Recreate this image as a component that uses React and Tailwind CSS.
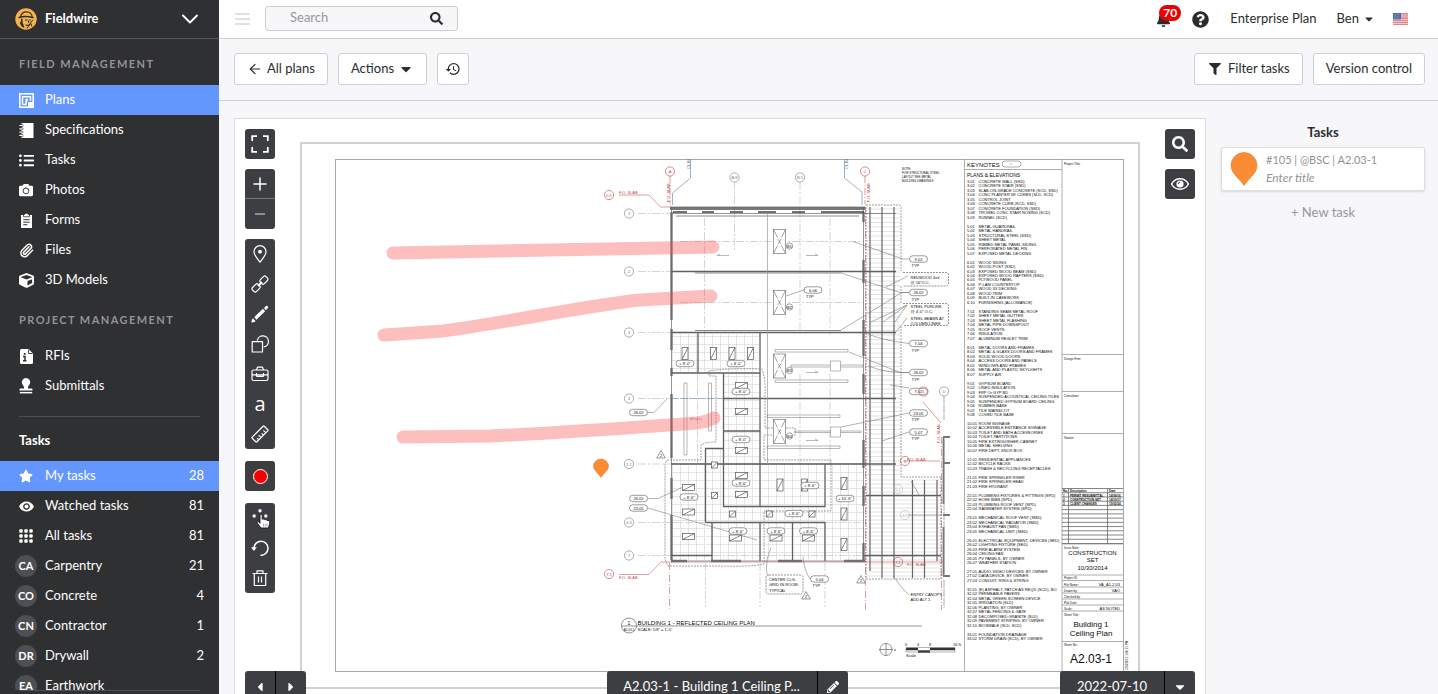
/* eslint-disable react/prop-types */
import {
  FaBell,
  FaCamera,
  FaCaretDown,
  FaCaretLeft,
  FaCaretRight,
  FaCube,
  FaFilter,
  FaListUl,
  FaPencilAlt,
  FaQuestionCircle,
  FaSearch,
  FaStar,
} from "react-icons/fa";
import { IoMdEye } from "react-icons/io";
import { MdHistory } from "react-icons/md";
import { ArrowLeft, ChevronDown, Paperclip } from "lucide-react";

/* ---------- icons ---------- */

const PlansIcon = () => (
  <svg viewBox="0 0 15 15" className="w-[15px] h-[15px]" fill="none" stroke="#fff">
    <rect x="0.8" y="0.8" width="13.4" height="13.4" strokeWidth="1.6" />
    <path d="M3.5 11.5V3.8H11.5V8M3.5 11.5H7V8H8.5M6.5 6.5H9" strokeWidth="1.4" />
    <rect x="9" y="9" width="5" height="5" fill="#fff" stroke="none" />
  </svg>
);

const SpecsIcon = () => (
  <svg viewBox="0 0 15 15" className="w-[15px] h-[15px]">
    <path d="M2.5 0h12v15h-12z" fill="#fff" />
    <path
      d="M0.8 2.5h2.4M0.8 5.8h2.4M0.8 9.1h2.4M0.8 12.4h2.4"
      stroke="#2f3032"
      strokeWidth="2.4"
      strokeLinecap="round"
    />
    <path
      d="M0.8 2.5h2.6M0.8 5.8h2.6M0.8 9.1h2.6M0.8 12.4h2.6"
      stroke="#fff"
      strokeWidth="1.2"
      strokeLinecap="round"
    />
  </svg>
);

const FormsIcon = () => (
  <svg viewBox="0 0 13 15" className="w-[13px] h-[15px]">
    <path d="M1 2h11v13H1z" fill="#fff" />
    <path d="M3.5 1.2h1.6a1.5 1.5 0 0 1 2.8 0h1.6v2.6h-6z" fill="#fff" stroke="#2f3032" strokeWidth="0.8" />
    <path d="M3.3 6.7h6.4M3.3 9.2h6.4M3.3 11.7h4" stroke="#2f3032" strokeWidth="1" />
  </svg>
);

const RfiIcon = () => (
  <svg viewBox="0 0 13 15" className="w-[13px] h-[15px]">
    <path d="M1.5 0H8.5L13 4.5V13.5A1.5 1.5 0 0 1 11.5 15H1.5A1.5 1.5 0 0 1 0 13.5V1.5A1.5 1.5 0 0 1 1.5 0z" fill="#fff" />
    <path d="M8.5 0.5V4.5H12.5" stroke="#2f3032" strokeWidth="0.9" fill="none" />
    <path d="M3 7.5H5V12M3 11.8H6.5" stroke="#2f3032" strokeWidth="1.5" fill="none" />
    <circle cx="4.7" cy="5" r="1" fill="#2f3032" />
  </svg>
);

const StampIcon = () => (
  <svg viewBox="0 0 14 16" className="w-[14px] h-4" fill="#fff">
    <path d="M7 0a4.3 4.3 0 0 1 4 5.6C10.5 7.3 9 8 9 9.5V10.5H12.5A1 1 0 0 1 13.5 11.5V12.6H0.5V11.5A1 1 0 0 1 1.5 10.5H5V9.5C5 8 3.5 7.3 3 5.6A4.3 4.3 0 0 1 7 0z" />
    <path d="M0.8 13.9h12.4v1.5H0.8z" />
  </svg>
);

const GridIcon = () => (
  <svg viewBox="0 0 14 14" className="w-[14px] h-[14px]" fill="#fff">
    {[0, 5, 10].map((y) =>
      [0, 5, 10].map((x) => (
        <rect key={`${x}-${y}`} x={x + 0.3} y={y + 0.3} width="3.4" height="3.4" rx="0.9" />
      ))
    )}
  </svg>
);

const LogoIcon = () => (
  <svg viewBox="0 0 22 22" className="w-[22px] h-[22px]">
    <circle cx="11" cy="11" r="10.7" fill="#f6b24e" />
    <path d="M5.5 9C6 5.5 8.5 3.8 11.5 3.8S17 6 17.2 9" fill="none" stroke="#2f3032" strokeWidth="1.2" />
    <path d="M3.5 9.7C7 8.4 14 8.4 18.5 9.7" fill="none" stroke="#2f3032" strokeWidth="1.5" />
    <path d="M6 10.5V13L4.8 15L6.5 18.5L9.5 20L8.5 16.5C7.5 15 7.3 12.5 7.8 11z" fill="#2f3032" />
    <path d="M10 12h2.5M14.5 12H16M13.5 12.5V14.8M10.5 16.8C12 17.6 14 17.4 15.3 16.3" fill="none" stroke="#2f3032" strokeWidth="1.2" />
    <path d="M12 20.5L15.5 15L17 18.5M15.5 15L17.8 12" fill="none" stroke="#2f3032" strokeWidth="1" />
  </svg>
);

const FlagIcon = () => (
  <svg viewBox="0 0 15 12" className="w-[15px] h-3">
    <rect width="15" height="12" rx="1" fill="#f4eef0" />
    <path d="M0 0.9h15M0 3h15M0 5.1h15M0 7.2h15M0 9.3h15M0 11.3h15" stroke="#d9606a" strokeWidth="1.1" />
    <rect width="8" height="6.4" fill="#4f6bb0" />
    <path d="M1 1.5h6M1 3.2h6M1 4.9h6" stroke="#b9c6e6" strokeWidth="0.6" strokeDasharray="0.7 0.8" />
  </svg>
);

const ToolSvg = ({ children }) => (
  <svg
    viewBox="0 0 18 18"
    className="w-[18px] h-[18px] overflow-visible"
    fill="none"
    stroke="#fff"
    strokeWidth="1.2"
    strokeLinejoin="round"
  >
    {children}
  </svg>
);

const FullscreenIcon = () => (
  <ToolSvg>
    <path d="M1.2 6V1.2H6M12 1.2H16.8V6M16.8 12V16.8H12M6 16.8H1.2V12" strokeWidth="1.8" strokeLinejoin="miter" />
  </ToolSvg>
);
const PlusIcon = () => (
  <ToolSvg>
    <path d="M9 2.5V15.5M2.5 9H15.5" strokeWidth="1.5" />
  </ToolSvg>
);
const MinusIcon = () => (
  <ToolSvg>
    <path d="M4 9H14" stroke="#a3a4a6" strokeWidth="1.6" />
  </ToolSvg>
);
const PinIcon = () => (
  <ToolSvg>
    <path d="M9 17.2C6.5 13.500 3 10.3 3 6.7A6 6 0 0 1 15 6.7C15 10.3 11.5 13.5 9 17.2z" />
    <circle cx="9" cy="6.7" r="1.9" fill="#fff" stroke="none" />
  </ToolSvg>
);
const LinkIcon = () => (
  <ToolSvg>
    <rect x="-4" y="-2.8" width="8" height="5.6" rx="1.8" transform="translate(12.9 5.1) rotate(-45)" />
    <rect x="-4" y="-2.8" width="8" height="5.6" rx="1.8" transform="translate(5.1 12.9) rotate(-45)" />
    <path d="M7 11L11 7" strokeWidth="1.8" />
  </ToolSvg>
);
const PencilIcon = () => (
  <ToolSvg>
    <path d="M4.3 13.5L13 5" strokeWidth="3.2" />
    <path d="M14.8 3.2L15.6 2.4" strokeWidth="3" strokeLinecap="round" />
    <path d="M1 17L1.8 14.2L3.8 16.2z" fill="#fff" />
  </ToolSvg>
);
const ShapesIcon = () => (
  <ToolSvg>
    <path d="M6.3 5.700A5.6 5.600 0 1 1 12.5 12" />
    <rect x="1.2" y="6.7" width="10.3" height="10.3" />
  </ToolSvg>
);
const ToolboxIcon = () => (
  <ToolSvg>
    <rect x="1" y="5" width="16" height="10.500" rx="1.500" />
    <path d="M5.5 5L6.5 2.2H11.5L12.5 5M1 9.8H17M5.5 8V11.600M12.5 8V11.600M5.5 11.300H12.5" />
  </ToolSvg>
);
const RulerIcon = () => (
  <ToolSvg>
    <g transform="rotate(-45 9 9)">
      <rect x="0.5" y="5.7" width="17" height="6.600" rx="0.8" />
      <path d="M4 12V9.8M7.3 12V8.8M10.6 12V9.8M14 12V8.8" />
    </g>
  </ToolSvg>
);
const MoveIcon = () => (
  <ToolSvg>
    <g fill="#fff" stroke="none">
      <circle cx="9" cy="1.8" r="1.7" />
      <circle cx="3.2" cy="7" r="1.700" />
      <circle cx="14.8" cy="7" r="1.700" />
    </g>
    <path
      d="M10 19L6.200 14C5.500 12.800 7 11.900 7.900 13L9 14.300V6.500C9 4.900 11.200 4.900 11.200 6.500V10.300C12.500 9.600 13.500 10.100 13.800 10.800C14.800 10.300 15.800 10.800 16.100 11.500C17.500 11.100 18.700 11.800 18.700 13.300C18.700 15.500 18 16.500 17.500 19z"
      fill="#fff"
      stroke="#161616"
      strokeWidth="0.9"
    />
    <path d="M12.500 14.500V17.500M14.300 14.500V17.500M16 14.500V17.500" stroke="#888" strokeWidth="0.7" />
  </ToolSvg>
);
const UndoIcon = () => (
  <ToolSvg>
    <path d="M3 9A7 7 0 1 1 9.5 16.2" strokeWidth="1.5" />
    <path d="M0 8.3H5.8L3 12z" fill="#fff" stroke="none" />
  </ToolSvg>
);
const TrashIcon = () => (
  <ToolSvg>
    <path d="M1.500 4.500H16.500M3.300 4.500V16.500H14.700V4.500M6 4.500V1.800H12V4.500M7.500 7.500V13.500M10.500 7.500V13.500" />
  </ToolSvg>
);
const EyeIcon = () => (
  <ToolSvg>
    <path d="M0.5 9C4.500 2 13.500 2 17.500 9C13.500 16 4.500 16 0.500 9z" strokeWidth="1.500" />
    <circle cx="9" cy="9" r="3.600" fill="#fff" stroke="none" />
    <path d="M9 7.200A1.800 1.800 0 0 0 7.200 9" stroke="#3d3e41" strokeWidth="1" />
  </ToolSvg>
);

/* ---------- sidebar ---------- */

const fieldLinks = [
  { name: "Plans", icon: <PlansIcon />, active: true },
  { name: "Specifications", icon: <SpecsIcon /> },
  { name: "Tasks", icon: <FaListUl size={15} /> },
  { name: "Photos", icon: <FaCamera size={14} /> },
  { name: "Forms", icon: <FormsIcon /> },
  { name: "Files", icon: <Paperclip size={15} strokeWidth={2.4} /> },
  { name: "3D Models", icon: <FaCube size={15} /> },
];

const projectLinks = [
  { name: "RFIs", icon: <RfiIcon /> },
  { name: "Submittals", icon: <StampIcon /> },
];

const taskLinks = [
  { name: "My tasks", icon: <FaStar size={14} />, count: 28, active: true },
  { name: "Watched tasks", icon: <IoMdEye size={17} />, count: 81 },
  { name: "All tasks", icon: <GridIcon />, count: 81 },
  { name: "Carpentry", initials: "CA", count: 21 },
  { name: "Concrete", initials: "CO", count: 4 },
  { name: "Contractor", initials: "CN", count: 1 },
  { name: "Drywall", initials: "DR", count: 2 },
  { name: "Earthwork", initials: "EA" },
];

const SideLink = ({ item }) => (
  <a
    href="#"
    className={`flex items-center h-[30px] px-[15px] text-[13px] ${
      item.active ? "bg-[#6497fe]" : ""
    }`}
  >
    <span className="w-[22px] mr-2 flex justify-center shrink-0">
      {item.initials ? (
        <span className="w-[22px] h-[22px] rounded-full bg-[#4d4f52] text-[11px] font-bold flex items-center justify-center">
          {item.initials}
        </span>
      ) : (
        item.icon
      )}
    </span>
    <span className="flex-1 whitespace-nowrap">{item.name}</span>
    <span>{item.count}</span>
  </a>
);

const SideHeading = ({ name }) => (
  <h2 className="h-[46px] pt-1 pl-[19px] flex items-center text-[11px] font-bold tracking-[0.13em] text-[#929395]">
    {name}
  </h2>
);

const Sidebar = () => (
  <aside className="w-[219px] shrink-0 flex flex-col bg-[#2f3032] text-white">
    <button className="h-[39px] shrink-0 flex items-center px-[15px] border-b border-[#55575a] text-[13px] font-bold">
      <LogoIcon />
      <span className="ml-2 flex-1 text-left">Fieldwire</span>
      <ChevronDown size={28} strokeWidth={1.6} />
    </button>
    <nav className="flex-1 min-h-0 overflow-hidden">
      <SideHeading name="FIELD MANAGEMENT" />
      {fieldLinks.map((item) => (
        <SideLink key={item.name} item={item} />
      ))}
      <SideHeading name="PROJECT MANAGEMENT" />
      {projectLinks.map((item) => (
        <SideLink key={item.name} item={item} />
      ))}
      <hr className="mt-[15px] mx-[19px] border-[#4c4e50]" />
      <h2 className="h-[44px] pt-1 pl-[19px] flex items-center text-[13px] font-bold">Tasks</h2>
      {taskLinks.map((item) => (
        <SideLink key={item.name} item={item} />
      ))}
    </nav>
    <div className="h-1 shrink-0 mx-[19px] border-t border-[#4c4e50]" />
  </aside>
);

/* ---------- top bars ---------- */

const TopBar = () => (
  <header className="h-[39px] shrink-0 flex items-center pl-4 pr-[30px] bg-white border-b border-[#cfcfd1] text-[13px]">
    <button aria-label="Toggle menu" className="flex flex-col gap-[3px] mr-[15px]">
      <span className="w-[15px] h-[2px] bg-[#e0e0e2]" />
      <span className="w-[15px] h-[2px] bg-[#e0e0e2]" />
      <span className="w-[15px] h-[2px] bg-[#e0e0e2]" />
    </button>
    <label className="w-[193px] h-[25px] flex items-center mb-[2px] pl-6 pr-[14px] bg-[#f7f7f9] border border-[#cfcfd1] rounded-[3px]">
      <input
        type="text"
        placeholder="Search"
        aria-label="Search"
        className="flex-1 min-w-0 bg-transparent outline-none placeholder:text-[#97989b]"
      />
      <FaSearch size={13} />
    </label>
    <div className="flex-1" />
    <button aria-label="Notifications" className="relative mr-[21px]">
      <FaBell size={15} />
      <span className="absolute -top-[7px] left-[3px] w-[22px] h-4 rounded-full bg-[#e90000] text-white text-xs font-bold leading-4 text-center">
        70
      </span>
    </button>
    <button aria-label="Help" className="mr-[21px]">
      <FaQuestionCircle size={17} />
    </button>
    <a href="#" className="mr-5">
      Enterprise Plan
    </a>
    <button className="flex items-center gap-1 mr-[18px]">
      Ben <FaCaretDown size={12} />
    </button>
    <FlagIcon />
  </header>
);

const BarButton = ({ children, label, className = "px-3" }) => (
  <button
    aria-label={label}
    className={`h-8 flex items-center bg-white border border-[#cfcfd3] rounded-[3px] text-[13px] whitespace-nowrap ${className}`}
  >
    {children}
  </button>
);

const ActionBar = () => (
  <div className="h-[62px] shrink-0 flex items-center gap-[10px] pb-[2px] pl-[15px] pr-[13px] border-b border-[#cfcfd3]">
    <BarButton>
      <ArrowLeft size={16} strokeWidth={1.8} className="mr-1" />
      All plans
    </BarButton>
    <BarButton>
      Actions
      <FaCaretDown size={16} className="ml-1" />
    </BarButton>
    <BarButton label="History" className="w-8 justify-center">
      <MdHistory size={16} />
    </BarButton>
    <div className="flex-1" />
    <BarButton>
      <FaFilter size={12} className="ml-[2px] mr-[7px]" />
      Filter tasks
    </BarButton>
    <BarButton>Version control</BarButton>
  </div>
);

/* ---------- drawing sheet ---------- */

const keynotes = `3.01|CONCRETE WALL (SSD)
3.02|CONCRETE STAIR (SSD)
3.03|SLAB-ON-GRADE CONCRETE (SCD, SSD)
3.04|CONC PLANTER W/ CURBS (SLD, SCD)
3.05|CONTROL JOINT
3.06|CONCRETE CURB (SCD, SSD)
3.07|CONCRETE FOUNDATION (SSD)
3.08|TROWEL CONC STAIR NOSING (SCD)
3.09|RUNNEL (SCD)

5.01|METAL GUARDRAIL
5.02|METAL HANDRAIL
5.03|STRUCTURAL STEEL (SSD)
5.04|SHEET METAL
5.05|RIBBED METAL PANEL SIDING
5.06|PERFORATED METAL FIN
5.07|EXPOSED METAL DECKING

6.01|WOOD SIDING
6.02|WOOD POST (SSD)
6.03|EXPOSED WOOD BEAM (SSD)
6.04|EXPOSED WOOD RAFTERS (SSD)
6.05|PLYWOOD PANEL
6.06|P-LAM COUNTERTOP
6.07|WOOD 3X DECKING
6.08|WOOD TRIM
6.09|BUILT-IN CASEWORK
6.10|FURNISHING (ALLOWANCE)

7.01|STANDING SEAM METAL ROOF
7.02|SHEET METAL GUTTER
7.03|SHEET METAL FLASHING
7.04|METAL PIPE DOWNSPOUT
7.05|ROOF VENTS
7.06|INSULATION
7.07|ALUMINUM REGLET TRIM

8.01|METAL DOORS AND FRAMES
8.02|METAL & GLASS DOORS AND FRAMES
8.03|SOLID WOOD DOORS
8.04|ACCESS DOORS AND PANELS
8.05|WINDOWS AND FRAMES
8.06|METAL AND PLASTIC SKYLIGHTS
8.07|SUPPLY AIR

9.01|GYPSUM BOARD
9.02|LINED INSULATION
9.03|FRP Or GYP BD
9.04|SUSPENDED ACOUSTICAL CEILING TILES
9.05|SUSPENDED GYPSUM BOARD CEILING
9.06|RUBBER BASE
9.07|TILE WAINSCOT
9.08|COVED TILE BASE

10.01|ROOM SIGNAGE
10.02|ACCESSIBLE ENTRANCE SIGNAGE
10.03|TOILET AND BATH ACCESSORIES
10.04|TOILET PARTITIONS
10.05|FIRE EXTINGUISHER CABINET
10.06|METAL SHELVING
10.07|FIRE DEPT. KNOX BOX

12.01|RESIDENTIAL APPLIANCES
12.02|BICYCLE RACKS
12.03|TRASH & RECYCLING RECEPTACLES

21.01|FIRE SPRINKLER RISER
21.02|FIRE SPRINKLER HEAD
21.03|FIRE HYDRANT

22.01|PLUMBING FIXTURES & FITTINGS (SPD)
22.02|HOSE BIBB (SPD)
22.03|PLUMBING ROOF VENT (SPD)
22.04|RAINWATER SYSTEM (SPD)

23.01|MECHANICAL ROOF VENT (SMD)
23.02|MECHANICAL RADIATOR (SMD)
23.04|EXHAUST FAN (SMD)
23.05|MECHANICAL UNIT (SMD)

26.01|ELECTRICAL EQUIPMENT, DEVICES (SED)
26.02|LIGHTING FIXTURE (SED)
26.03|FIRE ALARM SYSTEM
26.04|CEILING FAN
26.05|PV PANELS, BY OWNER
26.07|WEATHER STATION

27.01|AUDIO-VIDEO DEVICES, BY OWNER
27.02|DATA DEVICE, BY OWNER
27.03|CONDUIT, RING & STRING

32.01|(E) ASPHALT, PATCH AS REQD (SCD), BO
32.02|PERMEABLE PAVERS
32.04|METAL GREEN SCREEN DEVICE
32.05|IRRIGATION (SLD)
32.06|PLANTING, BY OWNER
32.07|METAL FENCING & GATE
32.08|DECOMPOSED GRANITE (SLD)
32.09|PAVEMENT STRIPING, BY OWNER
32.10|BIOSWALE (SLD, SCD)

33.01|FOUNDATION DRAINAGE
33.02|STORM DRAIN (SCD), BY OWNER`.split("\n");

const Label = ({ x, y, size = 4, children, ...rest }) => (
  <text x={x} y={y} fontSize={size} stroke="none" fill="#0c0c0c" {...rest}>
    {children}
  </text>
);

// numbered bubble at the end of a grid line
const Bubble = ({ x, y, n, color = "#777", r = 4.6 }) => (
  <g stroke={color} fill="none" strokeWidth="0.6">
    <circle cx={x} cy={y} r={r} />
    <Label x={x} y={y + 1.5} fill={color} textAnchor="middle">
      {n}
    </Label>
  </g>
);

// keynote tag, centred on x / y
const Tag = ({ x, y, n, typ }) => (
  <g stroke="#555" strokeWidth="0.6">
    <rect x={x - 9} y={y - 3.2} width="18" height="6.4" rx="3.2" fill="#fff" />
    <Label x={x} y={y + 1.5} textAnchor="middle">
      {n}
    </Label>
    {typ && (
      <Label x={x - 7} y={y + 8}>
        TYP
      </Label>
    )}
  </g>
);

const Light = ({ x, y, w = 12, h = 6 }) => (
  <g stroke="#555" strokeWidth="0.7" fill="#fff">
    <rect x={x - w / 2} y={y - h / 2} width={w} height={h} />
    <path d={`M${x - w / 2} ${y + h / 2}L${x + w / 2} ${y - h / 2}`} />
  </g>
);

const Skylight = ({ x, y, n }) => (
  <g stroke="#666" strokeWidth="0.6" fill="#fff">
    <rect x={x - 6.2} y={y - 12} width="12.4" height="24" />
    <path
      d={`M${x - 6} ${y - 12}l4 8M${x + 6} ${y - 12}l-4 8M${x - 6} ${y + 12}l4 -8M${x + 6} ${y + 12}l-4 -8M${x - 1.5} ${y - 2.5}l3 5M${x + 1.5} ${y - 2.5}l-3 5`}
    />
    <circle cx={x + 10} cy={y + 4.5} r="3.2" />
    <Label x={x + 10} y={y + 6} textAnchor="middle">
      {n}
    </Label>
  </g>
);

const Revision = ({ x, y }) => (
  <g stroke="#555" strokeWidth="0.6" fill="none">
    <path d={`M${x} ${y - 4.5}l4.3 7.5h-8.6z`} />
    <Label x={x} y={y + 2} textAnchor="middle">
      2
    </Label>
  </g>
);

const gridRows = [
  [213.5, "1"],
  [271.5, "2"],
  [332.5, "3"],
  [398.5, "4"],
  [464, "5.1"],
  [522.5, "6.3"],
  [555.5, "7"],
];

const tags = [
  [918.5, 259, "9.02", true],
  [813, 290, "6.06", true],
  [918.5, 292.5, "26.02", true],
  [918.5, 343.5, "7.04", true],
  [918.5, 372.5, "26.02", true],
  [918.5, 391.5, "7.02"],
  [918.5, 413, "23.05", true],
  [918.5, 432, "5.07", true],
  [638.5, 412.5, "26.02"],
  [638.5, 498.5, "26.02"],
  [638.5, 508, "23.05"],
  [819.5, 579, "5.04", true],
  [685, 363.5, "+ 8'-0\""],
  [736, 363.5, "+ 8'-0\""],
  [741, 391.5, "+ 8'-0\""],
  [741, 439.5, "+ 8'-0\""],
  [741, 483, "+ 8'-6\""],
  [689, 497, "+ 8'-6\""],
  [810, 485.5, "+ 8'-6\""],
  [794, 513.5, "+ 8'-6\""],
  [845, 498.5, "+ 10'-6\""],
  [738, 531, "+ 8'-6\""],
  [776, 531, "+ 8'-6\""],
  [808.5, 531, "+ 8'-6\""],
];

const lights = [
  [685, 353.5, 6, 12],
  [713.5, 353.5, 6, 12],
  [732, 353.5, 6, 12],
  [750.5, 353.5, 6, 12],
  [741.5, 385.5],
  [741.5, 411.5],
  [741.5, 450.5],
  [741.5, 475.5],
  [741.5, 494.5],
  [688.5, 487.5],
  [688.5, 512],
  [688.5, 536.5],
  [714.5, 465, 6, 6],
  [714.5, 495.5, 6, 6],
  [732.5, 514, 6, 6],
  [769.5, 514, 6, 6],
  [812, 514, 6, 6],
  [780, 485, 6, 12],
  [804.5, 485, 6, 12],
  [844, 483.5, 6, 12],
  [844, 514, 6, 12],
  [844, 544.5, 6, 12],
  [735.5, 538],
  [776, 538],
  [808.5, 538],
];

const titleRows = [
  [579, "Project ID:", ""],
  [585.5, "File Name:", "VA_A1-2.03"],
  [591.5, "Drawn by:", "VAO"],
  [597.5, "Checked by:", ""],
  [603.5, "Plot Date:", ""],
  [609.5, "Scale:", "AS NOTED"],
];

const revisions = [
  [492, "No.", "Description", "Date"],
  [496.5, "1", "PERMIT RESUBMITTAL", "14/09/16"],
  [500.5, "2", "CONSTRUCTION SET", "14/10/17"],
  [505, "3", "CLIENT CHANGES", "15/02/24"],
];

const TitleBlock = () => (
  <g stroke="#999" strokeWidth="0.8" fill="none">
    <path d="M964.5 159V671.5M1062 159V671.5M964.5 169.5H1062" />
    <rect x="1002" y="161" width="19" height="6" rx="3" />
    <path d="M1009 164H1013" strokeWidth="0.5" />
    <path d="M1062 354.5H1123M1062 391.5H1123M1062 433.5H1123" />
    <path d="M1062 544H1123M1062 575H1123M1062 580.5H1123M1062 587H1123M1062 593H1123M1062 599H1123M1062 605H1123M1062 611H1123M1062 641.5H1123" />
    <g stroke="#666">
      {Array.from({ length: 14 }, (_, i) => (
        <path key={i} d={`M1062 ${488.5 + i * 4.23}H1123`} />
      ))}
      <path d="M1068.5 488.5V543.5M1107.5 488.5V543.5" />
    </g>
    <Label x="967" y="167" size={6}>KEYNOTES</Label>
    <Label x="967" y="177" size={5}>PLANS &amp; ELEVATIONS</Label>
    <Label x="1064" y="164.5" size={3}>Project Title:</Label>
    <Label x="1064" y="359.5" size={3}>Design Firm:</Label>
    <Label x="1064" y="396.5" size={3}>Consultant:</Label>
    <Label x="1064" y="438.5" size={3}>Station:</Label>
    <g fontWeight="bold">
      {revisions.map(([y, no, description, date]) => (
        <g key={no}>
          <Label x="1063" y={y} size={3}>{no}</Label>
          <Label x="1070" y={y} size={3}>{description}</Label>
          <Label x="1109" y={y} size={3}>{date}</Label>
        </g>
      ))}
    </g>
    <Label x="1064" y="548.5" size={3}>Issue Note:</Label>
    <g textAnchor="middle">
      <Label x="1092.5" y="554.5" size={6}>CONSTRUCTION</Label>
      <Label x="1092.5" y="562" size={6}>SET</Label>
      <Label x="1092.5" y="570" size={6}>10/30/2014</Label>
      <Label x="1091" y="626.5" size={8}>Building 1</Label>
      <Label x="1091" y="635.5" size={8}>Ceiling Plan</Label>
      <Label x="1091" y="662.5" size={12}>A2.03-1</Label>
    </g>
    {titleRows.map(([y, name, value]) => (
      <g key={name}>
        <Label x="1064" y={y} size={3}>{name}</Label>
        <Label x="1120" y={y} textAnchor="end">{value}</Label>
      </g>
    ))}
    <Label x="1064" y="616" size={3}>Sheet Title:</Label>
    <Label x="1064" y="646" size={3}>Sheet No.:</Label>
    <Label x="0" y="0" size={3} transform="translate(1128 670) rotate(-90)">2/24/2015 1:00:11 PM</Label>
    {keynotes.map((line, i) => {
      const [n, text] = line.split("|");
      const y = 182.8 + i * 4.485;
      return (
        line && (
          <g key={n}>
            <Label x="967" y={y}>{n}</Label>
            <Label x="978.5" y={y}>{text}</Label>
          </g>
        )
      );
    })}
  </g>
);

const Building = () => (
  <g fill="none">
    {/* canopy */}
    <g stroke="#c4c4c6" strokeWidth="0.5">
      {Array.from({ length: 60 }, (_, i) => (
        <path key={i} d={`M866 ${209 + i * 4.5}H900`} />
      ))}
      {Array.from({ length: 25 }, (_, i) => (
        <path key={i} d={`M866 ${480 + i * 4}H941`} />
      ))}
    </g>
    <path
      d="M866 205H899Q901 205 901 207V271M901 286V303M901 326V477H941V579H866V205"
      stroke="#777"
      strokeWidth="0.7"
      strokeDasharray="2 1"
    />
    <path
      d="M870 207V571M882 207V578M894 207V578M912.5 480V578M924.5 480V578M937 480V561"
      stroke="#666"
      strokeWidth="1.2"
    />

    {/* ceiling tiles */}
    <g fill="url(#tile)" stroke="none">
      <path d="M672 334H759V372H672zM724 374H759V505H724zM672 465H705V560H672zM761 465H824V505H761zM826 465H863V560H826zM706 449H723V521H706zM706 507H825V521H706zM706 523H825V560H706z" />
    </g>

    {/* grid lines */}
    <g stroke="#aaa" strokeWidth="0.5" strokeDasharray="8 2 2 2">
      {gridRows.map(([y]) => (
        <path key={y} d={`M638 ${y}H670`} />
      ))}
      <path d="M734.5 182V250M800 182V335M704.5 218V335M830 218V335M697.5 374V464M800 374V464M830 374V464" />
      <path d="M680 241.5H864M680 302.5H864M671 522.5H864M671 555.5H864" />
      <path d="M705.5 563V607M760 563V607M825 563V607" />
    </g>
    <g stroke="#5d7d9c" strokeWidth="0.6">
      <path d="M690.5 160V178L672.5 193V205M844.5 160V178L862 192V205" />
      <path d="M944 396V420M944 580V608M944 440V577M671 464H866M671 398.5H866" strokeDasharray="8 1" />
    </g>
    <g stroke="#c1272d" strokeWidth="0.6" opacity="0.75">
      <path d="M619 195H649L660.5 207H671M619 574.5H649L661 562H944" />
      <path d="M670 176V204M865 176V204M669.5 563V610M865.5 207V610M941.5 437V610" strokeDasharray="7 2 1 2" />
      <path d="M923 402L941 423M903 461H940" />
    </g>

    {/* outer walls */}
    <g stroke="#77777a" strokeWidth="2.4">
      <path d="M670 208.5H865" strokeWidth="3" />
      <path d="M671.5 212V320M671.5 329V350M671.5 368V376M671.5 394V458M671.5 478V499M671.5 515V560" />
      <path d="M863.5 212V222M863.5 260V283M863.5 320V356M863.5 374V394M863.5 440V468M863.5 486V506M863.5 543V560" />
      <path d="M671 561H687M711 561H741M778 561H802M844 561H865" />
      <path d="M943.5 437V504M943.5 527V576M943 437H950M943 463H950M943 515H950M943 576H950" strokeWidth="1.8" />
    </g>
    <path d="M671.5 207V561M863.5 207V561M671 561H864M670 207H865M671 213.5H896" stroke="#666" strokeWidth="0.7" />
    <path d="M673 212H687M702 212H714M730 212H743M758 212H776M792 212H805M821 212H864" stroke="#444" strokeWidth="1.6" />
    <path d="M676 216H859M695 273H841M695 330.5H841" stroke="#888" strokeWidth="1" />

    {/* beams and partitions */}
    <g stroke="#606062" strokeWidth="1.3">
      <path d="M671 271.5H896M671 332.5H896M723 398.5H896M671 464H896M866 495.5H941M671 555.5H712M864 555.5H941" />
      <path d="M698 333V373M671 373H760M760 333V373M723.5 373V506.5H825V464M760 373V506M723 431H760M705.5 522V448.5H723M705.5 522.5H825V561M712 522V561M760 522V561M792.5 522V561" />
    </g>
    <path d="M767.5 213V464" stroke="#999" strokeWidth="0.7" />

    {/* mechanical runs */}
    <g stroke="#888" strokeWidth="0.6">
      <path d="M775 349.5h73v2.5h-73zM775 380h73v2.5h-73zM767 415h73v2.5h-73zM767 446h73v2.5h-73zM684 383h3v72h-3zM708.5 383h3v48h-3z" />
      <path d="M791 365h72v2h-72zM795 431h66v1.5h-66z" />
      <path d="M830.5 361h10v10h-10zM830.5 427h10v10h-10z" fill="#fff" />
      <path d="M729 255.5H717l3 -1.5M806 255.5h12l-3 -1.5M806 372.5h12l-3 -1.5M806 440.5h12l-3 -1.5M702 419H690l3 -1.5" />
    </g>

    {/* revision clouds */}
    <path
      d="M667 460H701V445Q705 442 716 442V376H709V371Q725 368 762 369Q766 380 765 395V428H795V435H764V460H831V511H764V564Q750 567 720 566H668Q664 560 665 550V464z"
      stroke="#888"
      strokeWidth="0.8"
      strokeDasharray="2 1"
    />

    {/* leaders */}
    <g stroke="#666" strokeWidth="0.5">
      <path d="M909 259H903L853 241.5M909 292.5H900L841 273M909 292.5H902L841 330M804 290L786 296M908 276L886 287M907 305L871 322M907 305L883 322M907 305L895 322M907 318L896 332" />
      <path d="M909 343.5Q880 340 866 333M909 372.5H900L849 352M909 372.5Q890 374 868 366M909 388L890 385M909 413L841 427M909 432L882 441M648 412.5H654L667 399M648 498.5H658L682 487.5M648 508L757 540" />
      <path d="M767 575Q765 560 771 548M810 579Q804 570 803 557M909 595Q901 588 894 577M866 495.5H911M911 481L919 495M908 515H941" />
    </g>

    {lights.map(([x, y, w, h]) => (
      <Light key={`${x}-${y}`} x={x} y={y} w={w} h={h} />
    ))}
    <Skylight x={779.5} y={241.5} n="B1" />
    <Skylight x={779.5} y={302.5} n="B2" />
    <Skylight x={779.5} y={366} n="B3" />
    <Skylight x={779.5} y={431.5} n="B4" />
    {tags.map(([x, y, n, typ]) => (
      <Tag key={`${x}-${y}`} x={x} y={y} n={n} typ={typ} />
    ))}
    {gridRows.map(([y, n]) => (
      <Bubble key={n} x={629} y={y} n={n} />
    ))}
    <Bubble x={670} y={171.5} n="A" color="#b5474b" />
    <Bubble x={734.5} y={177.5} n="A.8" />
    <Bubble x={800} y={177.5} n="B.5" />
    <Bubble x={865} y={171.5} n="C" color="#b5474b" />
    <Bubble x={609} y={195} n="0.9" color="#b5474b" />
    <Bubble x={609} y={574} n="7.1" color="#b5474b" />
    <Bubble x={923.5} y={391.5} n="1" color="#b5474b" />
    <Bubble x={944} y={391.5} n="D" />
    <Bubble x={905} y={461} n="5" color="#b5474b" />
    <Bubble x={898} y={562} n="7.1" color="#b5474b" />
    <Bubble x={898} y={489} n="5.7" color="#bbb" />
    <Bubble x={905} y={515} n="6.1" color="#bbb" />
    <Revision x={661} y={455} />
    <Revision x={861} y={580} />
    <Revision x={806} y={596} />

    {/* notes */}
    <g>
      <Label x="619" y="194" fill="#b5474b">F.O. SLAB</Label>
      <Label x="619" y="578.5" fill="#b5474b">F.O. SLAB</Label>
      <Label x="907" y="460.5" fill="#b5474b">F.O. SLAB</Label>
      <Label x="907" y="566" fill="#b5474b">F.O. SLAB</Label>
      <Label transform="translate(669.5 202) rotate(-90)" fill="#b5474b">F.O. SLAB</Label>
      <Label transform="translate(870 202) rotate(-90)" fill="#b5474b">F.O. SLAB</Label>
      <Label transform="translate(940 443) rotate(-90)" fill="#b5474b">F.O. SLAB</Label>
      <Label transform="translate(690 169) rotate(-90)" fill="#4a5f80">CL BI</Label>
      <Label transform="translate(848 169) rotate(-90)" fill="#4a5f80">CL BI</Label>
      <Label x="902" y="170" size={3}>NOTE:</Label>
      <Label x="902" y="174" size={3}>FOR STRUCTURAL STEEL</Label>
      <Label x="902" y="178" size={3}>LAYOUT SEE METAL</Label>
      <Label x="902" y="182" size={3}>BUILDING DRAWINGS</Label>
      <path
        d="M903 272.5H946Q948.5 272.5 948.5 275V283.5Q948.5 286 946 286H903M903 303.5H946Q948.5 303.5 948.5 306V323Q948.5 325.5 946 325.5H903M769 575H800Q803 575 803 578V591Q803 594 800 594H769Q766 594 766 591V578Q766 575 769 575"
        stroke="#666"
        strokeWidth="0.7"
        strokeDasharray="2 1"
      />
      <Label x="910.5" y="278.5">REDWOOD 4x4</Label>
      <Label x="910.5" y="284">@ 16&quot;O.C.</Label>
      <Label x="910.5" y="308">STEEL PURLINS</Label>
      <Label x="910.5" y="313">@ 4&apos;-0&quot; O.C.</Label>
      <Label x="910.5" y="319.5">STEEL BEAMS AT</Label>
      <Label x="910.5" y="324.5">COLUMN LINES</Label>
      <Label x="769" y="581">CENTER CLG.</Label>
      <Label x="769" y="586">GRID IN ROOM,</Label>
      <Label x="769" y="591.5">TYPICAL</Label>
      <Label x="910.5" y="596">ENTRY CANOPY,</Label>
      <Label x="910.5" y="601">ADD ALT 1</Label>
    </g>
  </g>
);

const Markup = ({ d }) => (
  <path
    d={d}
    fill="none"
    stroke="#f9504f"
    strokeOpacity="0.37"
    strokeWidth="13"
    strokeLinecap="round"
    strokeLinejoin="round"
  />
);

const Sheet = () => (
  <svg
    viewBox="235 119 970 575"
    className="block w-full h-full"
    fontFamily="Liberation Sans, Arial, sans-serif"
    role="img"
    aria-label="Building 1 reflected ceiling plan"
  >
    <defs>
      <pattern id="tile" width="8" height="8" patternUnits="userSpaceOnUse">
        <path d="M0 0.5H8M0.5 0V8" stroke="#d4d4d6" strokeWidth="0.6" />
      </pattern>
    </defs>
    <rect x="301" y="143" width="838" height="545" fill="none" stroke="#c6c6c6" strokeWidth="1.6" />
    <rect x="335.5" y="159.5" width="788" height="512" fill="none" stroke="#a8a8a8" />
    <TitleBlock />
    <Building />
    <g fill="none" stroke="#666" strokeWidth="0.7">
      <circle cx="629" cy="625.5" r="7.5" />
      <path d="M621 626H922" />
      <Label x="629" y="624.5" size={5} textAnchor="middle">1</Label>
      <Label x="629" y="630.5" size={3} textAnchor="middle">A2.03-1</Label>
      <Label x="637.5" y="624.5" size={6}>BUILDING 1 - REFLECTED CEILING PLAN</Label>
      <Label x="637.5" y="630.5" size={4}>SCALE: 1/8&quot; = 1&apos;-0&quot;</Label>
      <circle cx="886" cy="649.5" r="6" />
      <path d="M879 649.5H893M886 643V656" />
      <Label x="894" y="651">z</Label>
      <path d="M906 649H918M930 649H955" stroke="#333" strokeWidth="2.4" />
      <path d="M918 651.5H930" stroke="#333" strokeWidth="2.4" />
      <path d="M906 647.5H955V652H906z" strokeWidth="0.5" />
      <Label x="905" y="646">0</Label>
      <Label x="917" y="646">4</Label>
      <Label x="929" y="646">8</Label>
      <Label x="953" y="646">16 ft.</Label>
      <Label x="906" y="657">Scale</Label>
    </g>
    <Markup d="M393 253L713 247" />
    <Markup d="M384 335L443 331C510 322 590 305 640 300L711 296" />
    <Markup d="M403 437L490 436C560 433 640 427 697 423C706 422 710 420 714 418" />
    <path
      d="M601 477.5C598 473 593.5 470 593.5 466.3A7.5 7.3 0 0 1 608.5 466.3C608.5 470 604 473 601 477.5z"
      fill="#fb8c33"
      stroke="#d9742a"
      strokeWidth="0.5"
    />
  </svg>
);

/* ---------- plan viewer ---------- */

const ToolGroup = ({ tools, className = "" }) => (
  <div className={`w-[30px] flex flex-col rounded-[3px] bg-[#3d3e41] text-white ${className}`}>
    {tools.map(([name, icon]) => (
      <button key={name} aria-label={name} className="h-[30px] flex items-center justify-center">
        {icon}
      </button>
    ))}
  </div>
);

const drawTools = [
  ["Add task", <PinIcon />],
  ["Add link", <LinkIcon />],
  ["Draw", <PencilIcon />],
  ["Shapes", <ShapesIcon />],
  ["Toolbox", <ToolboxIcon />],
  ["Text", <span className="text-xl leading-none font-['Open_Sans',sans-serif]">a</span>],
  ["Measure", <RulerIcon />],
];

const editTools = [
  ["Move", <MoveIcon />],
  ["Undo", <UndoIcon />],
  ["Delete", <TrashIcon />],
];

const PlanViewer = () => (
  <main className="relative flex-1 min-w-0 overflow-hidden bg-white border border-b-0 border-[#dcdcdf]">
    <Sheet />
    <div className="absolute top-[10px] left-[10px] flex flex-col gap-[10px]">
      <ToolGroup tools={[["Fullscreen", <FullscreenIcon />]]} />
      <ToolGroup
        className="divide-y divide-[#77787a]"
        tools={[
          ["Zoom in", <PlusIcon />],
          ["Zoom out", <MinusIcon />],
        ]}
      />
      <ToolGroup tools={drawTools} />
      <ToolGroup
        className="mt-[2px]"
        tools={[
          [
            "Color",
            <span className="w-[15px] h-[15px] rounded-full bg-[#fb0000] border border-white" />,
          ],
        ]}
      />
      <ToolGroup className="mt-[2px]" tools={editTools} />
    </div>
    <div className="absolute top-[10px] right-[10px] flex flex-col gap-[10px]">
      <ToolGroup tools={[["Search plan", <FaSearch size={16} />]]} />
      <ToolGroup tools={[["Visibility", <EyeIcon />]]} />
    </div>
    <div className="absolute inset-x-[10px] -bottom-2 h-[31px] flex items-stretch justify-between text-[13px] text-white">
      <div className="flex rounded-[3px] bg-[#3d3e41] divide-x divide-black">
        <button aria-label="Previous plan" className="w-[31px] flex items-center justify-center">
          <FaCaretLeft size={14} />
        </button>
        <button aria-label="Next plan" className="w-[30px] flex items-center justify-center">
          <FaCaretRight size={14} />
        </button>
      </div>
      <div className="w-[241px] ml-[88px] flex rounded-[3px] bg-[#3d3e41] divide-x divide-black">
        <button className="flex-1 whitespace-nowrap">A2.03-1 - Building 1 Ceiling P...</button>
        <button aria-label="Edit name" className="w-[30px] flex items-center justify-center">
          <FaPencilAlt size={12} />
        </button>
      </div>
      <button className="w-[135px] flex items-stretch rounded-[3px] bg-[#3d3e41] divide-x divide-black">
        <span className="flex-1 flex items-center justify-center">2022-07-10</span>
        <span className="w-[30px] flex items-center justify-center">
          <FaCaretDown size={14} />
        </span>
      </button>
    </div>
  </main>
);

const TaskPanel = () => (
  <aside className="w-[232px] shrink-0 pl-[15px] pr-[13px] text-[13px]">
    <h2 className="pt-1 mb-[5px] text-center font-bold leading-5">Tasks</h2>
    <a
      href="#"
      className="h-[44px] flex items-center gap-2 pl-2 bg-white border border-[#dedee1] rounded-xs shadow-sm text-[#929395]"
    >
      <svg viewBox="0 0 28 34" className="w-7 h-[34px]">
        <path
          d="M14 33.5C9 26 1 21.5 1 13.5A13 13 0 0 1 27 13.5C27 21.5 19 26 14 33.5z"
          fill="#fb8c33"
          stroke="#dd7b2e"
          strokeWidth="0.6"
        />
      </svg>
      <span className="flex flex-col leading-[18px]">
        <span className="text-[11px]">#105 | @BSC | A2.03-1</span>
        <span className="text-xs leading-[18px] italic">Enter title</span>
      </span>
    </a>
    <button className="w-full mt-3 text-center text-[#97989b]">+ New task</button>
  </aside>
);

const App = () => {
  return (
    <div className="h-screen flex overflow-hidden bg-[#f7f7fa] text-[#2b2c2e] font-['Lato',sans-serif]">
      <Sidebar />
      <div className="flex-1 min-w-0 flex flex-col">
        <TopBar />
        <ActionBar />
        <div className="flex-1 min-h-0 flex pt-[17px] pl-[15px]">
          <PlanViewer />
          <TaskPanel />
        </div>
      </div>
    </div>
  );
};

export default App;
